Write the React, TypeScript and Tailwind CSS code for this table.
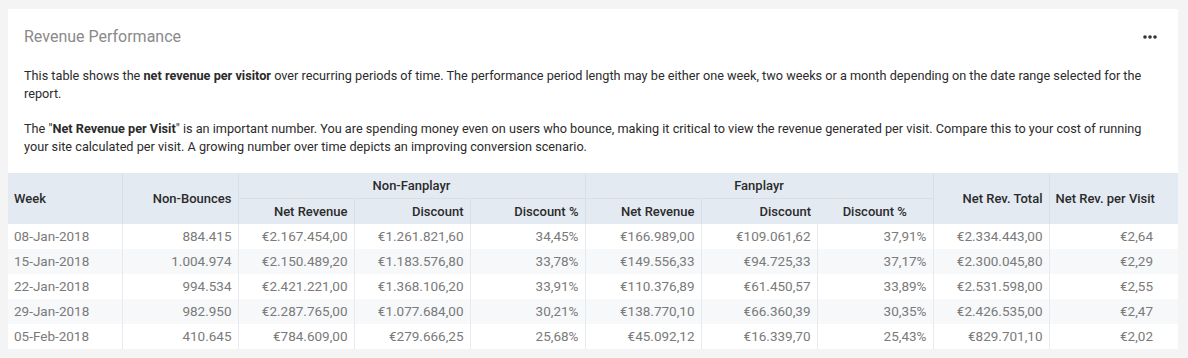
type Row = {
  week: string;
  nonBounces: string;
  nfRevenue: string;
  nfDiscount: string;
  nfPct: string;
  fRevenue: string;
  fDiscount: string;
  fPct: string;
  total: string;
  perVisit: string;
};

const rows: Row[] = [
  { week: '08-Jan-2018', nonBounces: '884.415', nfRevenue: '€2.167.454,00', nfDiscount: '€1.261.821,60', nfPct: '34,45%', fRevenue: '€166.989,00', fDiscount: '€109.061,62', fPct: '37,91%', total: '€2.334.443,00', perVisit: '€2,64' },
  { week: '15-Jan-2018', nonBounces: '1.004.974', nfRevenue: '€2.150.489,20', nfDiscount: '€1.183.576,80', nfPct: '33,78%', fRevenue: '€149.556,33', fDiscount: '€94.725,33', fPct: '37,17%', total: '€2.300.045,80', perVisit: '€2,29' },
  { week: '22-Jan-2018', nonBounces: '994.534', nfRevenue: '€2.421.221,00', nfDiscount: '€1.368.106,20', nfPct: '33,91%', fRevenue: '€110.376,89', fDiscount: '€61.450,57', fPct: '33,89%', total: '€2.531.598,00', perVisit: '€2,55' },
  { week: '29-Jan-2018', nonBounces: '982.950', nfRevenue: '€2.287.765,00', nfDiscount: '€1.077.684,00', nfPct: '30,21%', fRevenue: '€138.770,10', fDiscount: '€66.360,39', fPct: '30,35%', total: '€2.426.535,00', perVisit: '€2,47' },
  { week: '05-Feb-2018', nonBounces: '410.645', nfRevenue: '€784.609,00', nfDiscount: '€279.666,25', nfPct: '25,68%', fRevenue: '€45.092,12', fDiscount: '€16.339,70', fPct: '25,43%', total: '€829.701,10', perVisit: '€2,02' },
];

const th = 'border-l border-[#d9dfe7] px-[6px] text-[13px] font-medium whitespace-nowrap text-[#2b2b2b]';
const td = 'border-l border-[#e6e9ed] px-[6px] text-right';

const Dots = () => (
  <svg width="14" height="4" viewBox="0 0 14 4" className="text-[#333]">
    <circle cx="2" cy="2" r="1.8" fill="currentColor" />
    <circle cx="7" cy="2" r="1.8" fill="currentColor" />
    <circle cx="12" cy="2" r="1.8" fill="currentColor" />
  </svg>
);

export default function App() {
  return (
    <div className="min-h-[358px] bg-[#f4f4f4] px-[8px] pt-[9px] font-['Roboto',sans-serif]">
      <div className="w-[1170px] bg-white">
        <div className="flex items-center justify-between pl-[16px] pr-[21px] pt-[18px]">
          <h2 className="text-[16px] leading-[20px] text-[#8a8a8a]">Revenue Performance</h2>
          <Dots />
        </div>
        <div className="px-[16px] pt-[20px] pb-[17px] text-[12.7px] leading-[18px] text-[#2b2b2b]">
          <p>
            This table shows the <b className="font-bold">net revenue per visitor</b> over recurring periods of time. The performance period length may be either one week, two weeks or a month depending on the date range selected for the report.
          </p>
          <p className="mt-[17px]">
            The "<b className="font-bold">Net Revenue per Visit</b>" is an important number. You are spending money even on users who bounce, making it critical to view the revenue generated per visit. Compare this to your cost of running your site calculated per visit. A growing number over time depicts an improving conversion scenario.
          </p>
        </div>
        <table className="w-[1170px] table-fixed border-collapse text-[13.5px]">
          <colgroup>
            <col className="w-[114px]" />
            <col className="w-[116px]" />
            <col className="w-[116px]" />
            <col className="w-[116px]" />
            <col className="w-[115px]" />
            <col className="w-[116px]" />
            <col className="w-[116px]" />
            <col className="w-[116px]" />
            <col className="w-[116px]" />
            <col className="w-[129px]" />
          </colgroup>
          <thead className="bg-[#e4eaf2]">
            <tr className="h-[25px]">
              <th rowSpan={2} className="px-[6px] text-left text-[13px] font-medium text-[#2b2b2b]">Week</th>
              <th rowSpan={2} className={`${th} text-right`}>Non-Bounces</th>
              <th colSpan={3} className={`${th} border-b text-center`}>Non-Fanplayr</th>
              <th colSpan={3} className={`${th} border-b text-center`}>Fanplayr</th>
              <th rowSpan={2} className={`${th} text-right`}>Net Rev. Total</th>
              <th rowSpan={2} className={`${th} pr-[24px] text-right`}>Net Rev. per Visit</th>
            </tr>
            <tr className="h-[26px]">
              <th className={`${th} text-right`}>Net Revenue</th>
              <th className={`${th} text-right`}>Discount</th>
              <th className={`${th} text-right`}>Discount %</th>
              <th className={`${th} text-right`}>Net Revenue</th>
              <th className={`${th} text-right`}>Discount</th>
              <th className="px-[6px] text-center text-[13px] font-medium text-[#2b2b2b]">Discount %</th>
            </tr>
          </thead>
          <tbody className="text-[#7a7a7a]">
            {rows.map((r, i) => (
              <tr key={r.week} className={i % 2 === 1 ? 'h-[25px] bg-[#f6f8fa]' : 'h-[25px] bg-white'}>
                <td className="px-[6px] text-left">{r.week}</td>
                <td className={td}>{r.nonBounces}</td>
                <td className={td}>{r.nfRevenue}</td>
                <td className={td}>{r.nfDiscount}</td>
                <td className={td}>{r.nfPct}</td>
                <td className={td}>{r.fRevenue}</td>
                <td className={td}>{r.fDiscount}</td>
                <td className={td}>{r.fPct}</td>
                <td className={td}>{r.total}</td>
                <td className={`${td} pr-[25px]`}>{r.perVisit}</td>
              </tr>
            ))}
          </tbody>
        </table>
      </div>
    </div>
  );
}
